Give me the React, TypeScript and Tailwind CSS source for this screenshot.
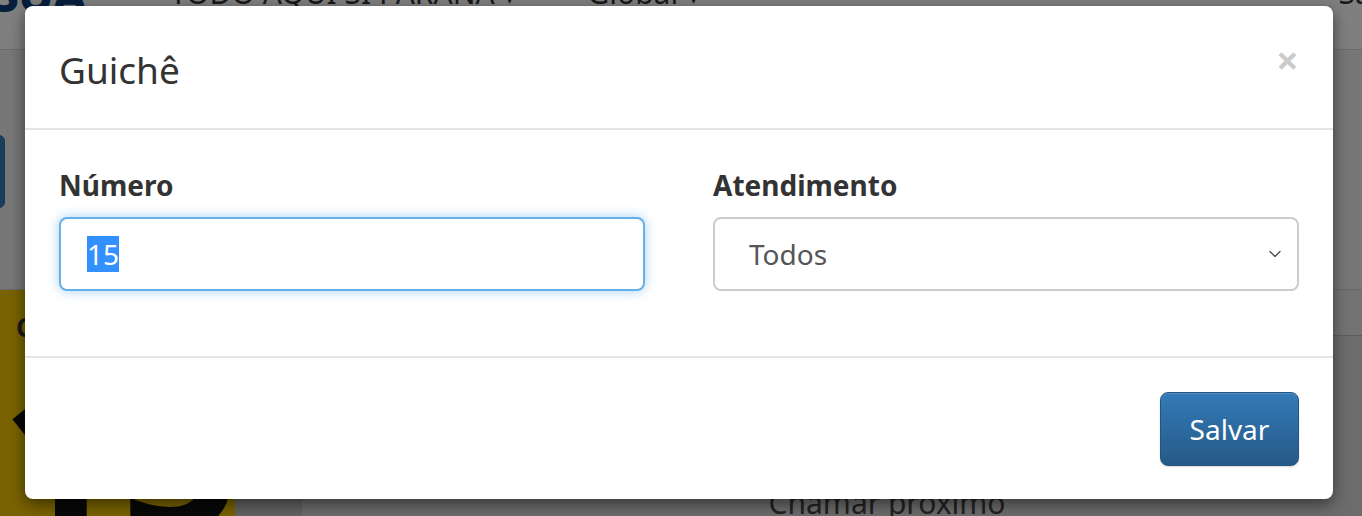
import React from 'react';
import { ChevronDown } from 'lucide-react';

const font = { fontFamily: '"Noto Sans", "Open Sans", sans-serif' };

function PageBehind() {
  return (
    <div className="flex h-full w-full flex-col bg-[#eeeeee] text-[#333]">
      <div className="flex h-[50px] shrink-0 items-end border-b border-[#d5d5d5] bg-white">
        <div className="flex h-full w-[170px] items-start overflow-hidden">
          <span className="-mt-[30px] -ml-[8px] text-[48px] font-extrabold leading-none tracking-tight text-[#0d3f7a]">SUA</span>
        </div>
        <div className="flex h-full items-start overflow-hidden">
          <span className="-mt-[22px] text-[30px] leading-none">TODO AQUI SI PARANA ▾</span>
          <span className="-mt-[22px] ml-[70px] text-[30px] leading-none">Global ▾</span>
        </div>
        <div className="ml-auto flex h-full items-start overflow-hidden">
          <span className="-mt-[22px] -mr-[30px] text-[30px] leading-none">Sair</span>
        </div>
      </div>
      <div className="h-[239px] shrink-0">
        <div className="mt-[85px] -ml-[20px] h-[73px] w-[25px] rounded-md border border-[#2e6da4] bg-[#337ab7]" />
      </div>
      <div className="flex h-[227px] shrink-0 overflow-hidden border-t border-[#d0d0d0]">
        <div className="flex w-[235px] flex-col overflow-hidden bg-[#f2c500] pl-[16px]">
          <span className="mt-[24px] text-[26px] font-bold leading-none">Chamado</span>
          <span className="-ml-[16px] mt-[26px] text-[210px] font-bold leading-[0.8] text-[#111]">15</span>
        </div>
        <div className="w-[67px] bg-[#c4c4c4]" />
        <div className="flex flex-1 flex-col bg-[#d8d8d8]">
          <div className="h-[46px] shrink-0 border-b border-[#bbb] bg-[#e6e6e6]" />
          <div className="flex flex-1 items-start justify-center pt-[152px]">
            <span className="ml-[110px] text-[30px] leading-none text-[#444]">Chamar próximo</span>
          </div>
        </div>
      </div>
    </div>
  );
}

export default function App() {
  return (
    <div className="relative h-[516px] w-[1362px] overflow-hidden" style={font}>
      <PageBehind />
      <div className="absolute inset-0 bg-black/50">
        <div className="ml-[25px] mt-[6px] w-[1308px] rounded-[8px] bg-white shadow-[0_5px_15px_rgba(0,0,0,0.5)]">
          <div className="flex h-[124px] items-center justify-between border-b-2 border-[#e5e5e5] px-[34px]">
            <h4 className="mt-[4px] text-[37px] font-normal leading-none text-[#333]">Guichê</h4>
            <button className="mt-[-14px] text-[40px] font-bold leading-none text-black opacity-20">×</button>
          </div>
          <div className="grid h-[228px] grid-cols-2 gap-x-[68px] border-b-2 border-[#e5e5e5] px-[34px] pt-[41px]">
            <div className="flex flex-col">
              <label className="text-[28px] font-bold leading-none text-[#333]">Número</label>
              <div className="mt-[18px] flex h-[74px] items-center rounded-[8px] border-2 border-[#66afe9] bg-white pl-[26px] shadow-[0_0_12px_rgba(102,175,233,0.6)]">
                <span className="bg-[#3390ff] text-[28px] leading-[36px] text-white">15</span>
              </div>
            </div>
            <div className="flex flex-col">
              <label className="text-[28px] font-bold leading-none text-[#333]">Atendimento</label>
              <div className="mt-[18px] flex h-[74px] items-center justify-between rounded-[8px] border-2 border-[#cccccc] bg-white pl-[34px] pr-[12px]">
                <span className="text-[28px] leading-none text-[#555]">Todos</span>
                <ChevronDown className="h-[20px] w-[20px] text-[#444]" strokeWidth={1.5} />
              </div>
            </div>
          </div>
          <div className="flex h-[141px] items-start justify-end px-[34px] pt-[34px]">
            <button className="h-[74px] w-[139px] rounded-[8px] border border-[#245580] bg-gradient-to-b from-[#337ab7] to-[#265a88] text-[28px] leading-none text-white shadow-[inset_0_1px_0_rgba(255,255,255,0.15),0_1px_2px_rgba(0,0,0,0.15)]">
              Salvar
            </button>
          </div>
        </div>
      </div>
    </div>
  );
}
